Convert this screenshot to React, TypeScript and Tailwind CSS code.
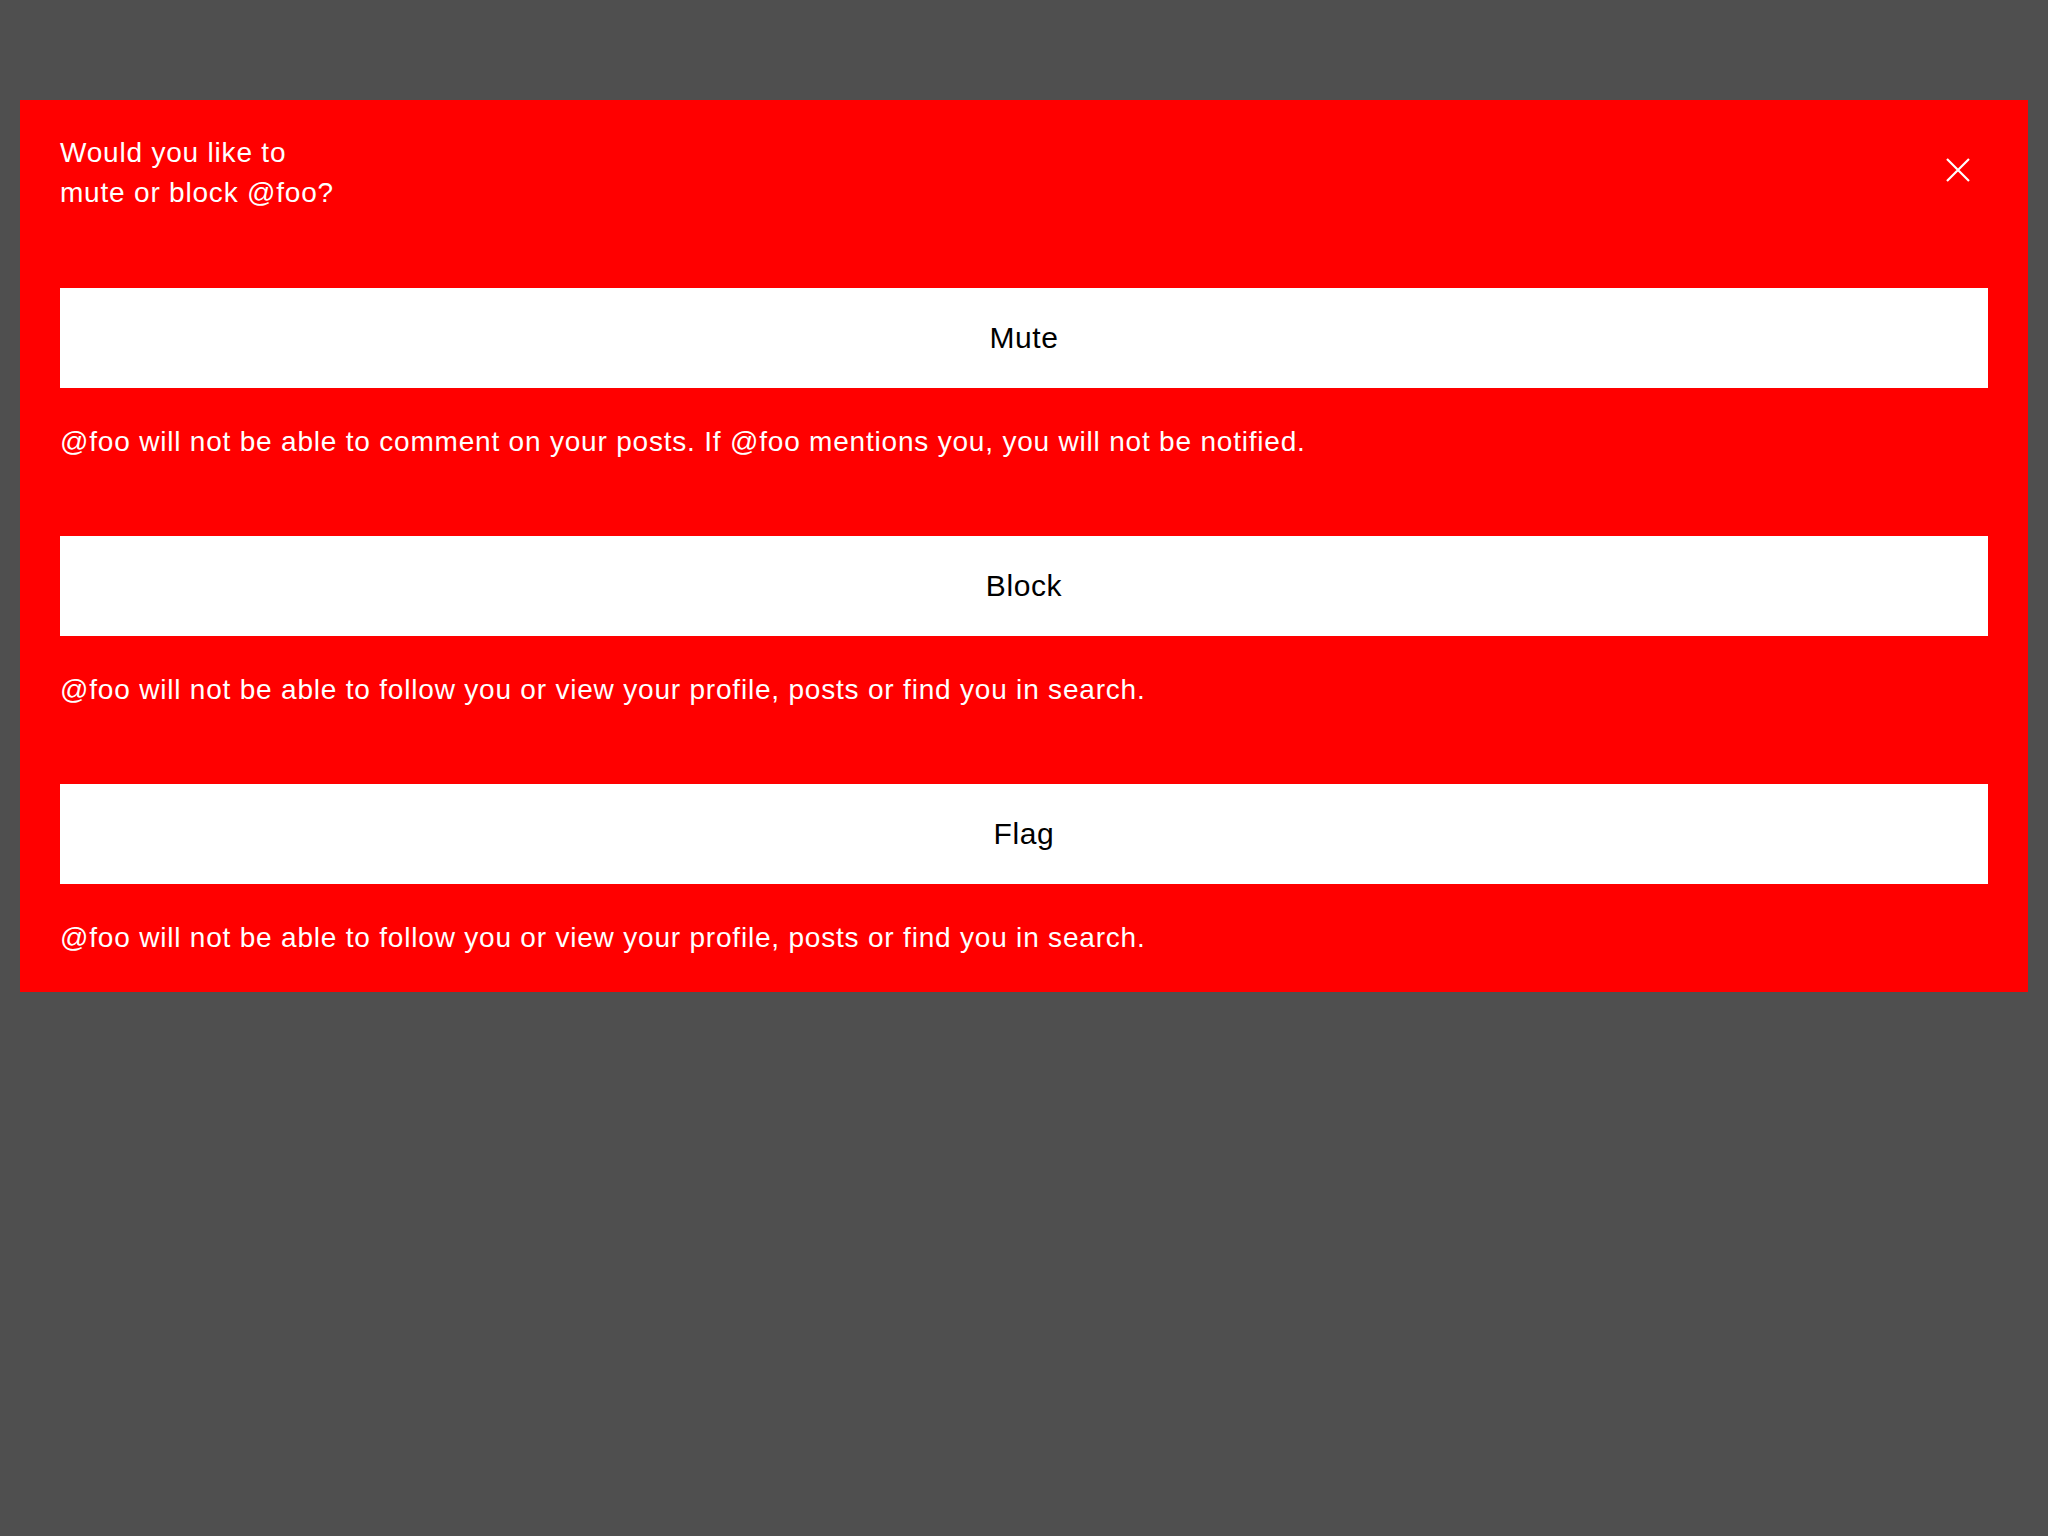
import React from 'react';

const options = [{
  label: 'Mute',
  note: '@foo will not be able to comment on your posts. If @foo mentions you, you will not be notified.'
}, {
  label: 'Block',
  note: '@foo will not be able to follow you or view your profile, posts or find you in search.'
}, {
  label: 'Flag',
  note: '@foo will not be able to follow you or view your profile, posts or find you in search.'
}];

export default function App() {
  return <div className="min-h-[1536px] w-full bg-[#4f4f4f] pt-[100px] px-[20px] font-['Liberation_Sans',Arial,sans-serif] tracking-[0.05em]">
      <div className="bg-[#ff0000] px-10 pt-[33px] pb-[34px] text-white">
        {/* Header */}
        <div className="flex items-start justify-between">
          <h1 className="text-[28px] leading-[40px] font-normal">
            Would you like to
            <br />
            mute or block @foo?
          </h1>
          <button aria-label="Close" className="mt-[25px] mr-[18px] w-6 h-6 text-white">
            <svg viewBox="0 0 24 24" width="24" height="24" fill="none" stroke="currentColor" strokeWidth="2.2">
              <path d="M1 1 L23 23 M23 1 L1 23" />
            </svg>
          </button>
        </div>

        <div className="mt-[75px] flex flex-col gap-[74px]">
          {options.map((opt) => <div key={opt.label}>
              <button className="w-full h-[100px] bg-white text-black text-[30px] leading-[40px] tracking-[0.02em] flex items-center justify-center">
                {opt.label}
              </button>
              <p className="mt-[34px] text-[28px] leading-[40px]">{opt.note}</p>
            </div>)}
        </div>
      </div>
    </div>;
}
